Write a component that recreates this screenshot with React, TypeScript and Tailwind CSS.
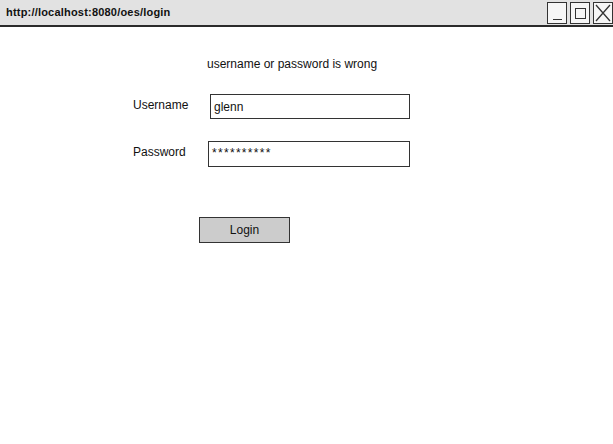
export default function App() {
  return (
    <div className="w-[613px] h-[444px] bg-white font-['Liberation_Sans',sans-serif] text-[12px] text-[#111] overflow-hidden">
      {/* Browser title bar */}
      <div className="h-[27px] bg-[#e2e2e2] border-b-2 border-[#2a2a2a] flex items-center justify-between">
        <span className="pl-[6px] text-[11px] font-bold tracking-[0.2px]">http://localhost:8080/oes/login</span>
        <div className="flex gap-[3px] self-start pt-[2px]">
          <div className="w-[20px] h-[22px] border border-[#333] bg-[#f6f6f6] flex items-end justify-center pb-[3px]">
            <div className="w-[9px] h-[1.5px] bg-[#333]" />
          </div>
          <div className="w-[20px] h-[22px] border border-[#333] bg-[#f6f6f6] flex items-center justify-center">
            <div className="w-[11px] h-[11px] border-[1.5px] border-[#333]" />
          </div>
          <div className="w-[20px] h-[22px] border border-[#333] bg-[#f6f6f6] flex items-center justify-center">
            <svg width="16" height="18" viewBox="0 0 16 18">
              <path d="M1 1 L15 17 M15 1 L1 17" stroke="#333" strokeWidth="1.3" fill="none" />
            </svg>
          </div>
        </div>
      </div>

      {/* Login form */}
      <div className="pl-[133px] pt-[29px]">
        <p className="ml-[74px] leading-[16px]">username or password is wrong</p>

        <div className="mt-[22px] flex items-center">
          <span className="w-[77px] mb-[4px]">Username</span>
          <div className="w-[200px] h-[25px] border-[1.5px] border-[#333] flex items-center px-[3px]">glenn</div>
        </div>

        <div className="mt-[22px] flex items-center">
          <span className="w-[75px] mb-[4px]">Password</span>
          <div className="w-[202px] h-[26px] border-[1.5px] border-[#333] flex items-center px-[3px] tracking-[1.3px]">
            <span className="mb-[3px]">**********</span>
          </div>
        </div>

        <button className="mt-[50px] ml-[66px] w-[91px] h-[26px] bg-[#cccccc] border-[1.5px] border-[#333] flex items-center justify-center">
          Login
        </button>
      </div>
    </div>
  );
}
